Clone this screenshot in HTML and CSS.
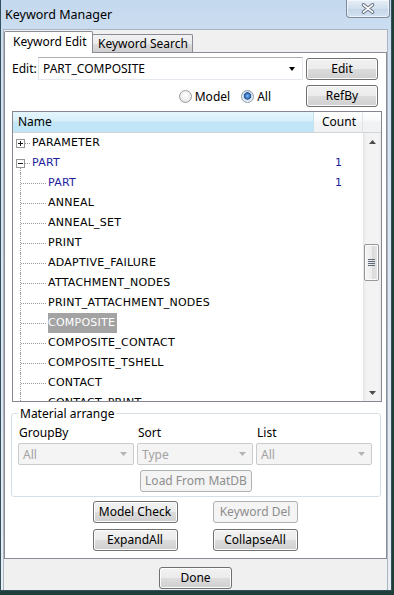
FILE: index.html
```html
<!DOCTYPE html>
<html>
<head>
<meta charset="utf-8">
<title>Keyword Manager</title>
<link rel="stylesheet" href="styles.css">
</head>
<body>
<div class="window">
  <div class="titlebar">
    <span class="title">Keyword Manager</span>
    <div class="close">
      <svg width="14" height="11" viewBox="0 0 14 11"><path d="M2.5 1.8 L11.5 9.2 M11.5 1.8 L2.5 9.2" stroke="#6c7684" stroke-width="3.6" stroke-linecap="round"/><path d="M2.5 1.8 L11.5 9.2 M11.5 1.8 L2.5 9.2" stroke="#ffffff" stroke-width="1.6" stroke-linecap="round"/></svg>
    </div>
  </div>
  <div class="client">
    <div class="tabs">
      <div class="tab active">Keyword Edit</div>
      <div class="tab">Keyword Search</div>
    </div>
    <div class="page">
      <div class="edit-row">
        <span class="lbl">Edit:</span>
        <div class="combo"><span class="combo-text">PART_COMPOSITE</span><span class="arrow"></span></div>
        <button class="btn btn-side">Edit</button>
      </div>
      <div class="radio-row">
        <span class="radio-item"><span class="radio"></span>Model</span>
        <span class="radio-item"><span class="radio checked"></span>All</span>
        <button class="btn btn-side">RefBy</button>
      </div>
      <div class="tree">
        <div class="tree-head">
          <div class="th th-name">Name</div>
          <div class="th th-count">Count</div>
          <div class="th th-pad"></div>
        </div>
        <div class="tree-body">
          <div class="rows">
            <div class="row top">
              <span class="exp-col"><svg width="9" height="9" viewBox="0 0 9 9"><rect x="0.5" y="0.5" width="8" height="8" fill="#fff" stroke="#969696"/><path d="M2 4.5h5M4.5 2v5" stroke="#1a1a1a"/></svg></span>
              <span class="stub"></span><span class="name">PARAMETER</span><span class="count"></span>
            </div>
            <div class="row top">
              <span class="exp-col open"><svg width="9" height="9" viewBox="0 0 9 9"><rect x="0.5" y="0.5" width="8" height="8" fill="#fff" stroke="#969696"/><path d="M2 4.5h5" stroke="#1a1a1a"/></svg></span>
              <span class="stub"></span><span class="name blue">PART</span><span class="count">1</span>
            </div>
            <div class="row"><span class="guide"></span><span class="name blue">PART</span><span class="count">1</span></div>
            <div class="row"><span class="guide"></span><span class="name">ANNEAL</span><span class="count"></span></div>
            <div class="row"><span class="guide"></span><span class="name">ANNEAL_SET</span><span class="count"></span></div>
            <div class="row"><span class="guide"></span><span class="name">PRINT</span><span class="count"></span></div>
            <div class="row"><span class="guide"></span><span class="name">ADAPTIVE_FAILURE</span><span class="count"></span></div>
            <div class="row"><span class="guide"></span><span class="name">ATTACHMENT_NODES</span><span class="count"></span></div>
            <div class="row"><span class="guide"></span><span class="name">PRINT_ATTACHMENT_NODES</span><span class="count"></span></div>
            <div class="row"><span class="guide"></span><span class="name sel">COMPOSITE</span><span class="count"></span></div>
            <div class="row"><span class="guide"></span><span class="name">COMPOSITE_CONTACT</span><span class="count"></span></div>
            <div class="row"><span class="guide"></span><span class="name">COMPOSITE_TSHELL</span><span class="count"></span></div>
            <div class="row"><span class="guide"></span><span class="name">CONTACT</span><span class="count"></span></div>
            <div class="row"><span class="guide"></span><span class="name">CONTACT_PRINT</span><span class="count"></span></div>
          </div>
          <div class="vscroll">
            <div class="sb-btn"><svg width="7" height="4" viewBox="0 0 7 4"><path d="M0 4 L3.5 0 L7 4 Z" fill="#4d4d4d"/></svg></div>
            <div class="sb-track">
              <div class="thumb">
                <svg width="7" height="7" viewBox="0 0 7 7"><path d="M0 0.5h7M0 2.5h7M0 4.5h7M0 6.5h7" stroke="#5e6a78"/></svg>
              </div>
            </div>
            <div class="sb-btn"><svg width="7" height="4" viewBox="0 0 7 4"><path d="M0 0 L3.5 4 L7 0 Z" fill="#4d4d4d"/></svg></div>
          </div>
        </div>
      </div>
      <fieldset class="group">
        <legend>Material arrange</legend>
        <div class="group-grid">
          <span class="glbl">GroupBy</span>
          <span class="glbl">Sort</span>
          <span class="glbl">List</span>
          <div class="dcombo"><span>All</span><svg width="7" height="4" viewBox="0 0 7 4"><path d="M0 0 L3.5 4 L7 0 Z" fill="#b4b4b4"/></svg></div>
          <div class="dcombo"><span>Type</span><svg width="7" height="4" viewBox="0 0 7 4"><path d="M0 0 L3.5 4 L7 0 Z" fill="#b4b4b4"/></svg></div>
          <div class="dcombo"><span>All</span><svg width="7" height="4" viewBox="0 0 7 4"><path d="M0 0 L3.5 4 L7 0 Z" fill="#b4b4b4"/></svg></div>
          <button class="btn disabled load">Load From MatDB</button>
        </div>
      </fieldset>
      <div class="actions">
        <button class="btn">Model Check</button>
        <button class="btn disabled">Keyword Del</button>
        <button class="btn">ExpandAll</button>
        <button class="btn">CollapseAll</button>
      </div>
    </div>
    <div class="footer">
      <button class="btn done">Done</button>
    </div>
  </div>
</div>
</body>
</html>
```

FILE: styles.css
```css
* { box-sizing: border-box; }

body {
  margin: 0;
  width: 394px;
  height: 595px;
  overflow: hidden;
  background: #1e3f37;
  font-family: "Noto Sans", "Open Sans", sans-serif;
  font-size: 12px;
  color: #000;
}

.window {
  width: 392px;
  height: 591px;
  display: flex;
  flex-direction: column;
  background: linear-gradient(#c4d8ee, #d3e2f2 60px, #dfe8f1 400px, #e9eef3);
  border-left: 1px solid #33505c;
  border-right: 1px solid #33505c;
  border-bottom: 1px solid #33505c;
  padding: 0 3px 0 2px;
}

.titlebar {
  height: 29px;
  flex: none;
  display: flex;
  align-items: flex-start;
  justify-content: space-between;
}

.title {
  margin-top: 6px;
  margin-left: 2px;
  font-size: 12.5px;
  line-height: 17px;
  color: #000;
}

.close {
  width: 44px;
  height: 18px;
  margin-right: -2px;
  border: 1px solid #7d8b9c;
  border-top: none;
  border-radius: 0 0 4px 4px;
  background: linear-gradient(#e6eef7, #d2dfee 50%, #c6d6ea 51%, #d3e1f0);
  box-shadow: inset 0 0 0 1px rgba(255,255,255,0.6);
  display: flex;
  align-items: center;
  justify-content: center;
}

.client {
  flex: 1;
  display: flex;
  flex-direction: column;
  background: #f0f0f0;
  border: 1px solid #a9b5c2;
  border-bottom: none;
}

.tabs {
  height: 22px;
  flex: none;
  display: flex;
  align-items: flex-end;
  position: relative;
  z-index: 1;
}

.tab {
  height: 18px;
  padding: 0 4px 0 5px;
  border: 1px solid #898c95;
  border-bottom: none;
  border-radius: 2px 2px 0 0;
  background: linear-gradient(#f2f2f2, #ebebeb 50%, #dddddd 50%, #cfcfcf);
  line-height: 17px;
  font-size: 12px;
  margin-left: -1px;
}

.tab.active {
  height: 22px;
  margin-left: 0;
  margin-bottom: -1px;
  width: 89px;
  padding: 0 0 0 8px;
  background: #ffffff;
  line-height: 19px;
  position: relative;
  z-index: 2;
}

.page {
  flex: none;
  height: 507px;
  background: #ffffff;
  border: 1px solid #898c95;
  margin-right: 0;
  padding: 4px 4px 0 7px;
  display: flex;
  flex-direction: column;
}

.edit-row {
  display: flex;
  align-items: center;
  height: 23px;
}

.lbl {
  width: 26px;
  flex: none;
}

.combo {
  width: 265px;
  height: 23px;
  border: 1px solid #abadb3;
  border-right-color: #e3e9ef;
  border-bottom-color: #e3e9ef;
  border-left-color: #e2e3ea;
  background: #fff;
  display: flex;
  align-items: center;
  justify-content: space-between;
  padding: 0 7px 0 4px;
}

.combo-text { line-height: 16px; }

.arrow {
  width: 0;
  height: 0;
  border-left: 3.5px solid transparent;
  border-right: 3.5px solid transparent;
  border-top: 4px solid #000;
}

.btn {
  font-family: "Noto Sans", "Open Sans", sans-serif;
  font-size: 12px;
  color: #000;
  height: 22px;
  padding: 0;
  border: 1px solid #707070;
  border-radius: 3px;
  background: linear-gradient(#f2f2f2, #ebebeb 50%, #dddddd 50%, #cfcfcf);
  box-shadow: inset 0 0 0 1px #fcfcfc;
  line-height: 18px;
}

.btn.disabled {
  border-color: #adb2b5;
  background: #f4f4f4;
  box-shadow: none;
  color: #8d8d8d;
}

.btn-side {
  width: 72px;
  margin-left: 3px;
  margin-right: 4px;
  flex: none;
}

.radio-row {
  margin-top: 5px;
  height: 22px;
  display: flex;
  align-items: center;
  justify-content: flex-end;
}

.radio-item {
  display: flex;
  align-items: center;
  margin-right: 11px;
}

.radio-item + .radio-item { margin-right: 32px; }

.radio {
  width: 13px;
  height: 13px;
  border-radius: 50%;
  border: 1px solid #9c9c9c;
  background: radial-gradient(circle at 50% 40%, #ffffff, #f0f0f0 50%, #d6d6d6);
  margin-right: 3px;
}

.radio.checked {
  border-color: #8a9aaa;
  background: radial-gradient(circle at 50% 45%, #8fc0f0 0, #2f6cb8 2.6px, #1f4f96 3.4px, #c4d4e6 3.9px, #f4f4f4 5.5px, #dcdcdc);
}

.tree {
  margin-top: 4px;
  height: 291px;
  border: 1px solid #828790;
  display: flex;
  flex-direction: column;
  flex: none;
}

.tree-head {
  height: 21px;
  display: flex;
  border-bottom: 1px solid #d5d5d5;
  flex: none;
}

.th {
  line-height: 19px;
  font-size: 12px;
}

.th-name {
  width: 301px;
  padding-left: 5px;
  background: linear-gradient(#e6f6fd, #d6eff9 45%, #c2e6f7 50%, #bfe5f6);
  border-right: 1px solid #c5e1ee;
}

.th-count {
  width: 49px;
  padding-left: 8px;
  background: linear-gradient(#ffffff, #f7f8fa 45%, #f1f2f4 50%, #f1f2f4);
  border-right: 1px solid #e3e4e6;
}

.th-pad {
  flex: 1;
  background: linear-gradient(#ffffff, #f7f8fa 45%, #f1f2f4 50%, #f1f2f4);
}

.tree-body {
  flex: 1;
  display: flex;
  overflow: hidden;
}

.rows {
  flex: 1;
  overflow: hidden;
  font-family: "DejaVu Sans", sans-serif;
  font-size: 11px;
  letter-spacing: 0.25px;
}

.row {
  height: 20px;
  display: flex;
  align-items: stretch;
}

.exp-col {
  width: 9px;
  margin-left: 3px;
  display: flex;
  flex-direction: column;
  flex: none;
}

.exp-col::before {
  content: "";
  flex: 1;
}

.exp-col::after {
  content: "";
  flex: 1;
}

.exp-col.open::after {
  margin-left: 4px;
  border-left: 1px dotted #9a9a9a;
}

.exp-col svg { display: block; flex: none; }

.stub {
  width: 5px;
  align-self: center;
  border-top: 1px dotted #9a9a9a;
  margin-right: 2px;
  margin-top: 1px;
}

.guide {
  width: 26px;
  margin-left: 7px;
  margin-right: 2px;
  border-left: 1px dotted #9a9a9a;
  display: flex;
  align-items: center;
  flex: none;
}

.guide::after {
  content: "";
  flex: 1;
  border-top: 1px dotted #9a9a9a;
  margin-top: 1px;
}

.name {
  line-height: 20px;
  white-space: nowrap;
}

.name.blue { color: #1e1e9c; }

.name.sel {
  background: #a3a3a3;
  color: #ffffff;
  padding-right: 2px;
}

.count {
  margin-left: auto;
  width: 49px;
  text-align: center;
  line-height: 20px;
  color: #1e1e9c;
  flex: none;
}

.vscroll {
  width: 18px;
  flex: none;
  display: flex;
  flex-direction: column;
  background: linear-gradient(to right, #e4e4e4, #f2f2f2 3px, #f3f3f3 15px, #ececec);
}

.sb-btn {
  height: 17px;
  display: flex;
  align-items: center;
  justify-content: center;
  flex: none;
}

.sb-btn svg { display: block; }

.sb-track {
  flex: 1;
  padding-top: 94px;
  padding-left: 1px;
}

.thumb {
  width: 15px;
  height: 37px;
  border: 1px solid #979797;
  border-radius: 2px;
  background: linear-gradient(to right, #f6f6f6, #ececec 50%, #dadada 51%, #e4e4e4);
  box-shadow: inset 0 0 0 1px #fbfbfb;
  display: flex;
  align-items: center;
  justify-content: center;
}

.thumb svg { display: block; }

.group {
  margin: 4px 1px 0 -1px;
  padding: 0 8px 4px 6px;
  border: 1px solid #d5dfe5;
  border-radius: 3px;
  min-width: 0;
}

.group legend {
  padding: 0 2px;
  line-height: 15px;
  font-size: 12px;
}

.group-grid {
  display: grid;
  grid-template-columns: 116px 116px 116px;
  column-gap: 3px;
  padding-top: 4px;
}

.glbl {
  line-height: 15px;
  padding-left: 1px;
}

.dcombo {
  margin-top: 3px;
  height: 22px;
  border: 1px solid #c9cbcd;
  border-radius: 2px;
  background: #f4f4f4;
  color: #a2a2a2;
  display: flex;
  align-items: center;
  justify-content: space-between;
  padding: 0 6px 0 4px;
}

.dcombo svg { display: block; }

.load {
  grid-column: 2;
  width: 112px;
  margin-top: 5px;
  margin-left: 3px;
}

.actions {
  margin-top: 4px;
  display: grid;
  grid-template-columns: 85px 85px;
  column-gap: 35px;
  row-gap: 6px;
  justify-content: center;
  margin-right: 0;
  margin-left: -4px;
}

.footer {
  flex: 1;
  display: flex;
  justify-content: center;
  padding-top: 8px;
}

.done {
  width: 73px;
}
```
